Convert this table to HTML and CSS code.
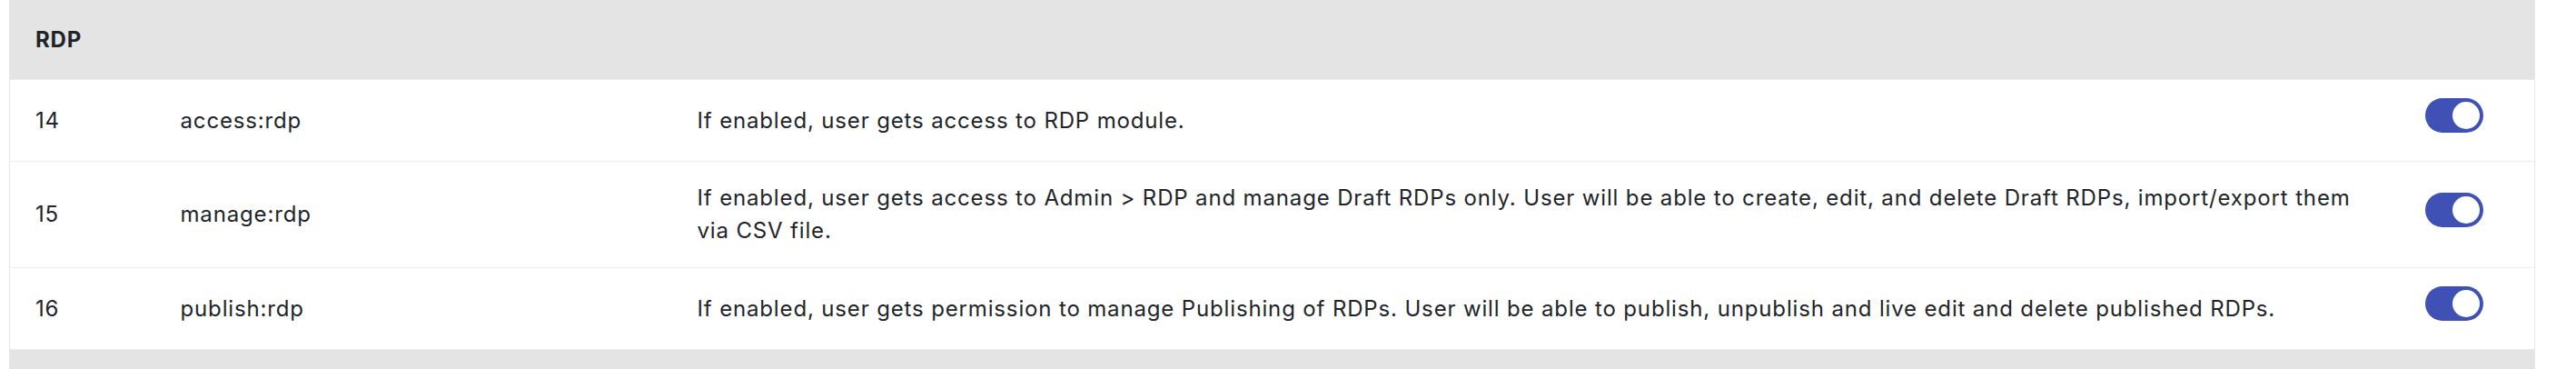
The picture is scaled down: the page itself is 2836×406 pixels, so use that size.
FILE: index.html
```html
<!DOCTYPE html>
<html lang="en">
<head>
<meta charset="utf-8">
<title>Permissions - RDP</title>
<link rel="stylesheet" href="styles.css">
</head>
<body>
<div class="page">
  <table class="perm-table">
    <colgroup>
      <col class="col-id">
      <col class="col-name">
      <col class="col-desc">
      <col class="col-toggle">
    </colgroup>
    <thead>
      <tr class="section-row">
        <th colspan="4">RDP</th>
      </tr>
    </thead>
    <tbody>
      <tr>
        <td>14</td>
        <td>access:rdp</td>
        <td>If enabled, user gets access to RDP module.</td>
        <td class="toggle-cell"><span class="toggle on"><span class="knob"></span></span></td>
      </tr>
      <tr>
        <td>15</td>
        <td>manage:rdp</td>
        <td>If enabled, user gets access to Admin &gt; RDP and manage Draft RDPs only. User will be able to create, edit, and delete Draft RDPs, import/export them via CSV file.</td>
        <td class="toggle-cell"><span class="toggle on"><span class="knob"></span></span></td>
      </tr>
      <tr>
        <td>16</td>
        <td>publish:rdp</td>
        <td>If enabled, user gets permission to manage Publishing of RDPs. User will be able to publish, unpublish and live edit and delete published RDPs.</td>
        <td class="toggle-cell"><span class="toggle on"><span class="knob"></span></span></td>
      </tr>
      <tr class="section-row">
        <th colspan="4">&nbsp;</th>
      </tr>
    </tbody>
  </table>
</div>
</body>
</html>
```

FILE: styles.css
```css
html, body {
  margin: 0;
  padding: 0;
  background: #ffffff;
}

body {
  font-family: Inter, "Noto Sans", "Liberation Sans", sans-serif;
  font-size: 24px;
  line-height: 36px;
  letter-spacing: 0.85px;
  color: #212529;
}

.page {
  padding: 0 45px 0 10px;
}

.perm-table {
  width: 100%;
  border-collapse: collapse;
  table-layout: fixed;
  border-left: 1px solid #e6e6e6;
  border-right: 1px solid #e6e6e6;
}

.col-id { width: 160px; }
.col-name { width: 569px; }
.col-toggle { width: 150px; }

.section-row th {
  background: #e4e4e4;
  text-align: left;
  font-weight: 700;
  padding: 26px 28px 25px;
  border-bottom: 1px solid #ececec;
}

.perm-table td {
  padding: 22px 28px;
  vertical-align: middle;
  border-bottom: 1px solid #ececec;
}

.perm-table td.toggle-cell {
  padding: 20px 0 20px 30px;
}

.toggle {
  display: block;
  position: relative;
  width: 64px;
  height: 38px;
  border-radius: 19px;
  background: #3f51b5;
  margin-bottom: 11px;
}

.toggle .knob {
  position: absolute;
  top: 4px;
  right: 4px;
  width: 30px;
  height: 30px;
  border-radius: 50%;
  background: #ffffff;
}
```
